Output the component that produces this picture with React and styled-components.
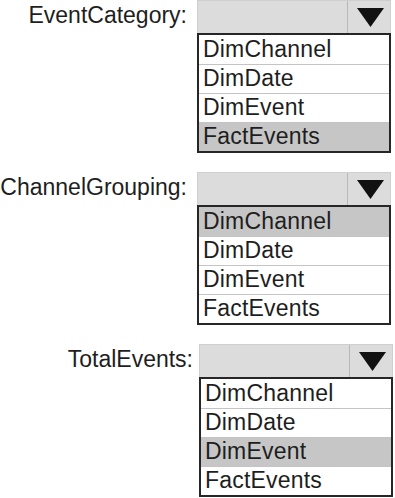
import React from "react";
import styled, { createGlobalStyle } from "styled-components";

const Global = createGlobalStyle`
  html, body { margin: 0; padding: 0; background: #ffffff; }
  body { font-family: "Liberation Sans", Arial, sans-serif; color: #1e1e1e; }
`;

const Page = styled.div`
  width: 395px;
  display: flex;
  flex-direction: column;
  gap: 19px;
`;

const Block = styled.div`
  display: grid;
  grid-template-columns: ${(p) => p.$labelWidth}px 194px;
  align-items: start;
`;

const Label = styled.div`
  height: 33px;
  display: flex;
  align-items: center;
  justify-content: flex-end;
  padding-right: ${(p) => p.$gap}px;
  padding-bottom: 2px;
  box-sizing: border-box;
  font-size: 23px;
  letter-spacing: 0px;
  color: #1e1e1e;
  white-space: nowrap;
`;

const Control = styled.div`
  display: flex;
  flex-direction: column;
`;

const SelectBar = styled.div`
  height: 33px;
  box-sizing: border-box;
  display: grid;
  grid-template-columns: 150px 1fr;
  background: #dcdcdc;
  border: 1px solid #cfcfcf;
  border-bottom: none;
`;

const SelectField = styled.div`
  border-right: 1px solid #b8b8b8;
`;

const ArrowCell = styled.div`
  display: flex;
  align-items: center;
  justify-content: center;
  padding-left: 2px;
`;

const List = styled.div`
  border: 2px solid #262626;
  background: #ffffff;
  display: flex;
  flex-direction: column;
  width: 194px;
  box-sizing: border-box;
`;

const Item = styled.div`
  height: 29px;
  box-sizing: border-box;
  display: flex;
  align-items: center;
  padding-left: 4px;
  padding-bottom: 1px;
  font-size: 23px;
  letter-spacing: 0.2px;
  color: #1e1e1e;
  background: ${(p) => (p.$selected ? "#c6c6c6" : "#ffffff")};
  border-top: ${(p) => (p.$first ? "none" : "1px solid #c4c4c4")};
`;

const Arrow = () => (
  <svg width="27" height="19" viewBox="0 0 27 19">
    <polygon points="0,0 27,0 13.5,19" fill="#111" />
  </svg>
);

const OPTIONS = ["DimChannel", "DimDate", "DimEvent", "FactEvents"];

const Dropdown = ({ label, selected, labelWidth, gap }) => (
  <Block $labelWidth={labelWidth}>
    <Label $gap={gap}>{label}</Label>
    <Control>
      <SelectBar>
        <SelectField />
        <ArrowCell>
          <Arrow />
        </ArrowCell>
      </SelectBar>
      <List>
        {OPTIONS.map((o, i) => (
          <Item key={o} $first={i === 0} $selected={o === selected}>
            {o}
          </Item>
        ))}
      </List>
    </Control>
  </Block>
);

export default function App() {
  return (
    <>
      <Global />
      <Page>
        <Dropdown label="EventCategory:" selected="FactEvents" labelWidth={197} gap={10} />
        <Dropdown label="ChannelGrouping:" selected="DimChannel" labelWidth={197} gap={10} />
        <Dropdown label="TotalEvents:" selected="DimEvent" labelWidth={199} gap={6} />
      </Page>
    </>
  );
}
